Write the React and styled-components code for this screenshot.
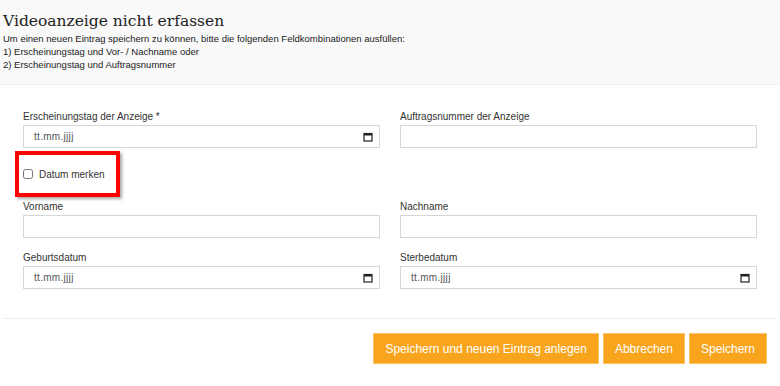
import styled, { createGlobalStyle } from "styled-components";

const GlobalStyle = createGlobalStyle`
  body {
    margin: 0;
    background: #fff;
    font-family: "Liberation Sans", Arial, sans-serif;
    color: #333;
  }
`;

function CalendarIcon() {
  return (
    <svg width="10" height="10" viewBox="0 0 10 10">
      <rect x="1" y="1.5" width="8" height="7.5" fill="none" stroke="#222" strokeWidth="1.2" />
      <rect x="1" y="1.5" width="8" height="2" fill="#222" />
    </svg>
  );
}

function DateInput() {
  return (
    <DateBox>
      <Placeholder>tt.mm.jjjj</Placeholder>
      <CalendarIcon />
    </DateBox>
  );
}

function Field({ label, date }) {
  return (
    <FieldWrap>
      <Label>{label}</Label>
      {date ? <DateInput /> : <TextInput />}
    </FieldWrap>
  );
}

export default function App() {
  return (
    <>
      <GlobalStyle />
      <Page>
        <Header>
          <Title>Videoanzeige nicht erfassen</Title>
          <Info>
            Um einen neuen Eintrag speichern zu können, bitte die folgenden Feldkombinationen ausfüllen:
            <br />
            1) Erscheinungstag und Vor- / Nachname oder
            <br />
            2) Erscheinungstag und Auftragsnummer
          </Info>
        </Header>
        <Form>
          <Field label="Erscheinungstag der Anzeige *" date />
          <Field label="Auftragsnummer der Anzeige" />
          <Highlight>
            <Check type="checkbox" />
            <CheckLabel>Datum merken</CheckLabel>
          </Highlight>
          <div />
          <Field label="Vorname" />
          <Field label="Nachname" />
          <Field label="Geburtsdatum" date />
          <Field label="Sterbedatum" date />
        </Form>
        <Divider />
        <Actions>
          <Button>Speichern und neuen Eintrag anlegen</Button>
          <Button>Abbrechen</Button>
          <Button>Speichern</Button>
        </Actions>
      </Page>
    </>
  );
}

const Page = styled.div`
  width: 780px;
  height: 386px;
  overflow: hidden;
`;

const Header = styled.div`
  background: #f9f9f9;
  height: 85px;
  box-sizing: border-box;
  padding: 11px 3px 0;
  border-bottom: 1px solid #f0f0f0;
`;

const Title = styled.h1`
  margin: 0;
  font-family: "DejaVu Serif", "Liberation Serif", serif;
  font-weight: normal;
  font-size: 15.5px;
  line-height: 21px;
  color: #222;
`;

const Info = styled.div`
  font-size: 9.5px;
  line-height: 13px;
  color: #222;
`;

const Form = styled.div`
  display: grid;
  grid-template-columns: 1fr 1fr;
  column-gap: 20px;
  padding: 26px 23px 0;
`;

const FieldWrap = styled.div`
  display: flex;
  flex-direction: column;
  margin-bottom: 14px;
`;

const Label = styled.label`
  font-size: 10px;
  line-height: 12px;
  margin-bottom: 2px;
  color: #333;
`;

const TextInput = styled.input`
  height: 23px;
  box-sizing: border-box;
  border: 1px solid #d6d6d6;
  padding: 0 9px;
  font: inherit;
  outline: none;
`;

const DateBox = styled.div`
  height: 23px;
  box-sizing: border-box;
  border: 1px solid #d6d6d6;
  padding: 0 6px 0 10px;
  display: flex;
  align-items: center;
  justify-content: space-between;
`;

const Placeholder = styled.span`
  font-size: 10px;
  letter-spacing: 0.3px;
  color: #555;
`;

const Highlight = styled.div`
  width: 105px;
  height: 46px;
  box-sizing: border-box;
  margin: -11px 0 4px -8px;
  border: 4px solid #f00;
  box-shadow: 2px 2px 3px rgba(0, 0, 0, 0.35);
  display: flex;
  align-items: center;
  padding-left: 3px;
`;

const Check = styled.input`
  width: 10px;
  height: 10px;
  margin: 0 6px 0 1px;
`;

const CheckLabel = styled.span`
  font-size: 10px;
  color: #333;
`;

const Divider = styled.hr`
  margin: 15px 3px 0;
  border: 0;
  border-top: 1px solid #ececec;
`;

const Actions = styled.div`
  display: flex;
  justify-content: flex-end;
  gap: 4px;
  padding: 14px 13px 0 0;
`;

const Button = styled.button`
  height: 31px;
  padding: 0 11px;
  background: #f8a51d;
  border: 1px solid #fbc462;
  color: #fff;
  font-family: "Liberation Sans", Arial, sans-serif;
  font-size: 12px;
`;
